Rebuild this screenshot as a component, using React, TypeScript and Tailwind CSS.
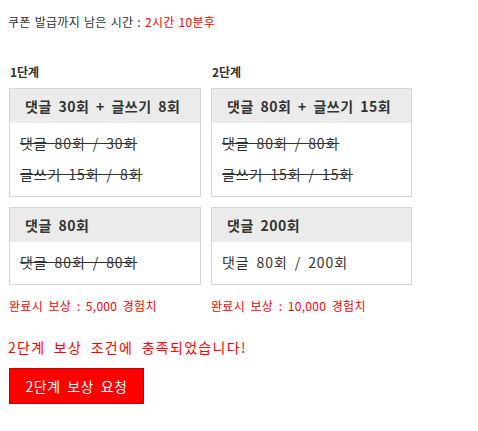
import React from "react";

const font = { fontFamily: '"Noto Sans CJK KR", "Noto Sans", sans-serif' };

function Box({ title, lines, struck }: { title: string; lines: string[]; struck: boolean }) {
  return (
    <div className="border border-[#d6d6d6] bg-white">
      <div className="h-[34px] bg-[#ebebeb] flex items-center pl-[15px] text-[14px] font-bold text-[#333] [word-spacing:3px] tracking-[0.5px]">
        {title}
      </div>
      <div className="pt-[5px] pb-[6px] pl-[10px]">
        {lines.map((l) => (
          <div
            key={l}
            className={`leading-[31px] text-[14px] text-[#333] [word-spacing:3px] tracking-[0.9px] ${struck ? "line-through" : ""}`}
          >
            {l}
          </div>
        ))}
      </div>
    </div>
  );
}

export default function App() {
  return (
    <div className="bg-white w-[478px] h-[431px] text-[#333]" style={font}>
      <div className="pt-[15px] pl-[8px] text-[12px] leading-[14px] [word-spacing:1px] tracking-[0.3px]">
        쿠폰 발급까지 남은 시간 : <span className="text-[#ff0000]">2시간 10분후</span>
      </div>
      <div className="flex gap-[10px] pl-[9px] mt-[36px]">
        <div className="w-[192px] flex flex-col">
          <div className="pl-[1px] text-[12px] font-bold leading-[14px] h-[14px]">1단계</div>
          <div className="mt-[9px]">
            <Box title="댓글 30회 + 글쓰기 8회" lines={["댓글 80회 / 30회", "글쓰기 15회 / 8회"]} struck />
          </div>
          <div className="mt-[10px]">
            <Box title="댓글 80회" lines={["댓글 80회 / 80회"]} struck />
          </div>
          <div className="mt-[14px] text-[12px] leading-[14px] text-[#ff0000] [word-spacing:2.5px] tracking-[0.3px]">완료시 보상 : 5,000 경험치</div>
        </div>
        <div className="w-[201px] flex flex-col">
          <div className="pl-[1px] text-[12px] font-bold leading-[14px] h-[14px]">2단계</div>
          <div className="mt-[9px]">
            <Box title="댓글 80회 + 글쓰기 15회" lines={["댓글 80회 / 80회", "글쓰기 15회 / 15회"]} struck />
          </div>
          <div className="mt-[10px]">
            <Box title="댓글 200회" lines={["댓글 80회 / 200회"]} struck={false} />
          </div>
          <div className="mt-[14px] text-[12px] leading-[14px] text-[#ff0000] [word-spacing:2.5px] tracking-[0.3px]">완료시 보상 : 10,000 경험치</div>
        </div>
      </div>
      <div className="pl-[8px] mt-[25px] text-[14px] leading-[18px] text-[#ff0000] tracking-[1.3px] [word-spacing:4px]">
        2단계 보상 조건에 충족되었습니다!
      </div>
      <div className="pl-[9px] mt-[12px]">
        <button className="w-[135px] h-[36px] bg-[#ff0000] border border-[#c80000] text-white text-[14px] tracking-[0.5px] [word-spacing:3px] flex items-center justify-center" style={font}>
          2단계 보상 요청
        </button>
      </div>
    </div>
  );
}
